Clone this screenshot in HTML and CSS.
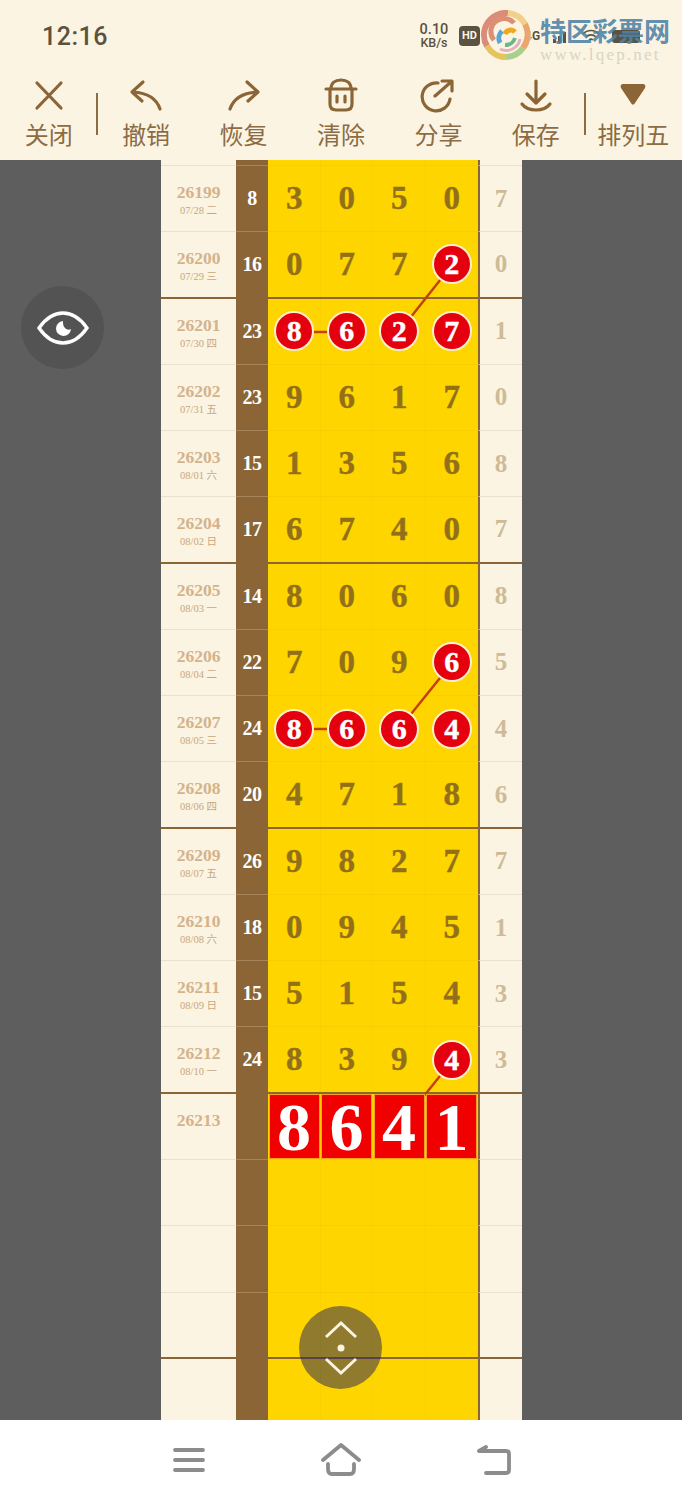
FILE: index.html
```html
<!DOCTYPE html>
<html lang="zh">
<head>
  <meta charset="UTF-8">
  <meta name="viewport" content="width=device-width, initial-scale=1.0">
  <title>排列五</title>
  <link rel="stylesheet" href="styles.css">
</head>
<body>
  <!-- top bar -->
  <div class="header">
    <div class="status">
      <span class="clock">12:16</span>
      <div class="status-right">
        <span class="speed">0.10<br><small>KB/s</small></span>
        <span class="hd">HD</span>
        <span class="sim">1<br>2</span>
        <span class="net">4G</span>
        <svg class="bars" width="16" height="14" viewBox="0 0 16 14"><path d="M1 14V10h3v4zM6 14V7h3v7zM11 14V3h3v11z" fill="#5c5240"/></svg>
        <svg class="wifi" width="18" height="14" viewBox="0 0 18 14"><path d="M1 5a11 11 0 0 1 16 0M4 8a7 7 0 0 1 10 0M7 11a3 3 0 0 1 4 0" fill="none" stroke="#5c5240" stroke-width="1.6"/></svg>
        <span class="battery"></span>
      </div>
      <div class="watermark">
        <svg class="logo" width="50" height="50" viewBox="0 0 50 50">
          <circle cx="25" cy="25" r="25" fill="#fbf4e2"/>
          <g fill="none" stroke-width="6">
            <path d="M27 3A22 22 0 0 0 6 36" stroke="#d98c78"/>
            <path d="M6 36A22 22 0 0 0 25 47" stroke="#e7c35c"/>
            <path d="M25 47A22 22 0 0 0 42 38" stroke="#a8d08a"/>
            <path d="M42 38A22 22 0 0 0 44 14" stroke="#e9a66e"/>
            <path d="M44 14A22 22 0 0 0 27 3" stroke="#f2cf8a"/>
            <path d="M13 30A13 13 0 0 1 33 13" stroke="#dd8f74" stroke-width="5"/>
            <path d="M19 39A14 14 0 0 0 39 29" stroke="#e8b0bc" stroke-width="3"/>
            <path d="M19 33A10 10 0 0 1 21 21" stroke="#5aa7d6" stroke-width="5"/>
            <path d="M24 35A10 10 0 0 0 34 28" stroke="#6bb68c" stroke-width="4"/>
            <path d="M24 24A6 6 0 0 1 34 22" stroke="#f2a51f" stroke-width="5"/>
          </g>
        </svg>
        <div class="mark-text">
          <div class="mark-name">特区彩票网</div>
          <div class="mark-url">www.lqep.net</div>
        </div>
      </div>
    </div>
    <div class="toolbar">
      <div class="tool sep">
        <svg width="36" height="36" viewBox="0 0 36 36"><path d="M6 5l24 25M30 5L6 30" class="ico"/></svg>
        <span>关闭</span>
      </div>
      <div class="tool">
        <svg width="36" height="36" viewBox="0 0 36 36"><path d="M32 31C29 22 22 15 5 14M15 4L4 14l10 9" class="ico"/></svg>
        <span>撤销</span>
      </div>
      <div class="tool">
        <svg width="36" height="36" viewBox="0 0 36 36"><path d="M4 31C7 22 14 15 31 14M21 4l11 10-10 9" class="ico"/></svg>
        <span>恢复</span>
      </div>
      <div class="tool">
        <svg width="36" height="36" viewBox="0 0 36 36"><path d="M8 11c0-6 4-9 10-9s10 3 10 9M3 11h30M7 11v15c0 4 2 6 6 6h10c4 0 6-2 6-6V11M14 18v6M22 18v6" class="ico"/></svg>
        <span>清除</span>
      </div>
      <div class="tool">
        <svg width="36" height="36" viewBox="0 0 36 36"><path d="M18 5A14 14 0 1 0 30 21M15 18L31 4M22 3h10v10" class="ico"/></svg>
        <span>分享</span>
      </div>
      <div class="tool sep">
        <svg width="36" height="36" viewBox="0 0 36 36"><path d="M18 3v22M9 16l9 9 9-9M4 26c3 4 8 6 14 6s11-2 14-6" class="ico"/></svg>
        <span>保存</span>
      </div>
      <div class="tool">
        <svg width="36" height="36" viewBox="0 0 36 36"><path d="M8 6h20c2 0 3 2 2 4L20 25c-1 2-3 2-4 0L6 10C5 8 6 6 8 6z" fill="#8c6536"/></svg>
        <span>排列五</span>
      </div>
    </div>
  </div>

  <!-- chart -->
  <div class="main">
    <div class="board">
      <svg class="links" width="361" height="1260" viewBox="0 0 361 1260">
        <path d="M291 105L238 172M133 172H186M291 503L238 569M133 569H186M291 901L238 967" fill="none" stroke="#c4400c" stroke-width="2.5"/>
      </svg>

      <div class="row stub"><div class="c-id"></div><div class="c-sum"></div><div class="c-num"></div><div class="c-num"></div><div class="c-num"></div><div class="c-num"></div><div class="c-last"></div></div>

      <div class="row">
        <div class="c-id">26199<small>07/28 二</small></div><div class="c-sum">8</div>
        <div class="c-num">3</div><div class="c-num">0</div><div class="c-num">5</div><div class="c-num">0</div>
        <div class="c-last">7</div>
      </div>
      <div class="row end">
        <div class="c-id">26200<small>07/29 三</small></div><div class="c-sum">16</div>
        <div class="c-num">0</div><div class="c-num">7</div><div class="c-num">7</div><div class="c-num"><b>2</b></div>
        <div class="c-last">0</div>
      </div>
      <div class="row">
        <div class="c-id">26201<small>07/30 四</small></div><div class="c-sum">23</div>
        <div class="c-num"><b>8</b></div><div class="c-num"><b>6</b></div><div class="c-num"><b>2</b></div><div class="c-num"><b>7</b></div>
        <div class="c-last">1</div>
      </div>
      <div class="row">
        <div class="c-id">26202<small>07/31 五</small></div><div class="c-sum">23</div>
        <div class="c-num">9</div><div class="c-num">6</div><div class="c-num">1</div><div class="c-num">7</div>
        <div class="c-last">0</div>
      </div>
      <div class="row">
        <div class="c-id">26203<small>08/01 六</small></div><div class="c-sum">15</div>
        <div class="c-num">1</div><div class="c-num">3</div><div class="c-num">5</div><div class="c-num">6</div>
        <div class="c-last">8</div>
      </div>
      <div class="row end">
        <div class="c-id">26204<small>08/02 日</small></div><div class="c-sum">17</div>
        <div class="c-num">6</div><div class="c-num">7</div><div class="c-num">4</div><div class="c-num">0</div>
        <div class="c-last">7</div>
      </div>
      <div class="row">
        <div class="c-id">26205<small>08/03 一</small></div><div class="c-sum">14</div>
        <div class="c-num">8</div><div class="c-num">0</div><div class="c-num">6</div><div class="c-num">0</div>
        <div class="c-last">8</div>
      </div>
      <div class="row">
        <div class="c-id">26206<small>08/04 二</small></div><div class="c-sum">22</div>
        <div class="c-num">7</div><div class="c-num">0</div><div class="c-num">9</div><div class="c-num"><b>6</b></div>
        <div class="c-last">5</div>
      </div>
      <div class="row">
        <div class="c-id">26207<small>08/05 三</small></div><div class="c-sum">24</div>
        <div class="c-num"><b>8</b></div><div class="c-num"><b>6</b></div><div class="c-num"><b>6</b></div><div class="c-num"><b>4</b></div>
        <div class="c-last">4</div>
      </div>
      <div class="row end">
        <div class="c-id">26208<small>08/06 四</small></div><div class="c-sum">20</div>
        <div class="c-num">4</div><div class="c-num">7</div><div class="c-num">1</div><div class="c-num">8</div>
        <div class="c-last">6</div>
      </div>
      <div class="row">
        <div class="c-id">26209<small>08/07 五</small></div><div class="c-sum">26</div>
        <div class="c-num">9</div><div class="c-num">8</div><div class="c-num">2</div><div class="c-num">7</div>
        <div class="c-last">7</div>
      </div>
      <div class="row">
        <div class="c-id">26210<small>08/08 六</small></div><div class="c-sum">18</div>
        <div class="c-num">0</div><div class="c-num">9</div><div class="c-num">4</div><div class="c-num">5</div>
        <div class="c-last">1</div>
      </div>
      <div class="row">
        <div class="c-id">26211<small>08/09 日</small></div><div class="c-sum">15</div>
        <div class="c-num">5</div><div class="c-num">1</div><div class="c-num">5</div><div class="c-num">4</div>
        <div class="c-last">3</div>
      </div>
      <div class="row end">
        <div class="c-id">26212<small>08/10 一</small></div><div class="c-sum">24</div>
        <div class="c-num">8</div><div class="c-num">3</div><div class="c-num">9</div><div class="c-num"><b>4</b></div>
        <div class="c-last">3</div>
      </div>
      <div class="row">
        <div class="c-id">26213</div><div class="c-sum"></div>
        <div class="c-num"><i>8</i></div><div class="c-num"><i>6</i></div><div class="c-num"><i>4</i></div><div class="c-num"><i>1</i></div>
        <div class="c-last"></div>
      </div>
      <div class="row"><div class="c-id"></div><div class="c-sum"></div><div class="c-num"></div><div class="c-num"></div><div class="c-num"></div><div class="c-num"></div><div class="c-last"></div></div>
      <div class="row"><div class="c-id"></div><div class="c-sum"></div><div class="c-num"></div><div class="c-num"></div><div class="c-num"></div><div class="c-num"></div><div class="c-last"></div></div>
      <div class="row end"><div class="c-id"></div><div class="c-sum"></div><div class="c-num"></div><div class="c-num"></div><div class="c-num"></div><div class="c-num"></div><div class="c-last"></div></div>
      <div class="row"><div class="c-id"></div><div class="c-sum"></div><div class="c-num"></div><div class="c-num"></div><div class="c-num"></div><div class="c-num"></div><div class="c-last"></div></div>
    </div>

    <!-- floating buttons -->
    <div class="float-btn eye-btn">
      <svg width="52" height="36" viewBox="0 0 52 36"><path d="M2 18C9 8 17 3 26 3s17 5 24 15c-7 10-15 15-24 15S9 28 2 18z" fill="none" stroke="#fff" stroke-width="3.4"/><path d="M26 11a7.5 7.5 0 1 0 8 8c-2 1-4 1-6-1-2-2-2-4-2-7z" fill="#fff"/></svg>
    </div>
    <div class="float-btn page-btn">
      <svg width="40" height="60" viewBox="0 0 40 60"><path d="M5 19L20 5l15 14M5 41l15 14 15-14" fill="none" stroke="#fbf4e2" stroke-width="3"/><circle cx="20" cy="30" r="3.5" fill="#fbf4e2"/></svg>
    </div>
  </div>

  <!-- system nav -->
  <div class="nav">
    <svg width="34" height="30" viewBox="0 0 34 30"><path d="M3 5h28M3 15h28M3 25h28" class="nav-ico"/></svg>
    <svg width="42" height="34" viewBox="0 0 42 34"><path d="M3 17L21 2l18 15M8 21v5c0 3 1 5 4 5h18c3 0 4-2 4-5v-5" class="nav-ico"/></svg>
    <svg width="36" height="32" viewBox="0 0 36 32"><path d="M3 7h27c2 0 3 1 3 3v16c0 2-1 3-3 3H10M10 3L3 7" class="nav-ico"/></svg>
  </div>
</body>
</html>
```

FILE: styles.css
```css
* {
  box-sizing: border-box;
  margin: 0;
  padding: 0;
}
body {
  width: 682px;
  height: 1500px;
  overflow: hidden;
  display: flex;
  flex-direction: column;
  background-color: #fff;
  font-family: "Noto Sans CJK SC", "Noto Sans", sans-serif;
}
/* top bar */
.header {
  height: 160px;
  background-color: #fbf4e2;
  color: #8c6c44;
}
.status {
  position: relative;
  height: 72px;
  display: flex;
  align-items: center;
  justify-content: space-between;
  padding: 0 42px;
  color: #5c5240;
}
.clock {
  font-family: Roboto, sans-serif;
  font-weight: 500;
  font-size: 25px;
  letter-spacing: 0.5px;
}
.status-right {
  display: flex;
  align-items: center;
  font-family: Roboto, sans-serif;
}
.speed {
  width: 32px;
  font-size: 14.5px;
  font-weight: 500;
  line-height: 13px;
  text-align: center;
  margin-right: 9px;
}
.speed small {
  font-size: 12.5px;
}
.hd {
  width: 21px;
  height: 20px;
  line-height: 20px;
  border-radius: 4px;
  background-color: #5c5240;
  color: #fbf4e2;
  font-size: 11px;
  font-weight: 700;
  text-align: center;
}
.sim {
  width: 5px;
  font-size: 10px;
  line-height: 10px;
  color: #7d3b2a;
  margin: 0 38px 0 2px;
}
.net {
  width: 14px;
  font-size: 12px;
  font-weight: 700;
  margin-right: 13px;
}
.wifi {
  margin: 0 12px 0 14px;
}
.battery {
  width: 28px;
  height: 13px;
  border-radius: 3px;
  background-color: #5c5240;
}
.watermark {
  position: absolute;
  left: 481px;
  top: 10px;
  display: flex;
  gap: 9px;
}
.mark-text {
  margin-top: 5px;
}
.mark-name {
  font-size: 26px;
  font-weight: 700;
  line-height: 30px;
  color: rgba(78, 130, 168, 0.9);
  white-space: nowrap;
}
.mark-url {
  font-family: "Liberation Serif", serif;
  font-size: 17px;
  line-height: 20px;
  letter-spacing: 2.2px;
  color: #d9d3c6;
  white-space: nowrap;
}
.toolbar {
  display: flex;
  height: 88px;
}
.tool {
  position: relative;
  flex: 1;
  display: flex;
  flex-direction: column;
  align-items: center;
  padding-top: 6px;
}
.tool svg {
  flex: none;
}
.tool span {
  font-size: 24px;
  line-height: 34px;
  margin-top: 3px;
  white-space: nowrap;
}
.sep::after {
  content: "";
  position: absolute;
  right: -1px;
  top: 21px;
  width: 2px;
  height: 42px;
  background-color: #8c6c44;
}
.ico {
  fill: none;
  stroke: #8c6536;
  stroke-width: 3.2;
  stroke-linecap: round;
  stroke-linejoin: round;
}
/* chart */
.main {
  position: relative;
  height: 1260px;
  background-color: #5e5e5e;
  padding-left: 161px;
}
.board {
  position: relative;
  width: 361px;
  height: 1260px;
  overflow: hidden;
  background-color: #fbf4e2;
}
.links {
  position: absolute;
  left: 0;
  top: 0;
  z-index: 1;
}
.row {
  display: grid;
  grid-template-columns: 75px 32px repeat(4, 52.5px) 44px;
  grid-template-rows: 66.28px;
  height: 66.28px;
}
.row.stub {
  grid-template-rows: 6px;
  height: 6px;
}
.row > div {
  border-bottom: 1px solid #e9e1cd;
}
.c-id {
  display: flex;
  flex-direction: column;
  align-items: center;
  padding-top: 16px;
  font-family: "Liberation Serif", "Noto Sans CJK SC", serif;
  font-weight: 700;
  font-size: 17.5px;
  line-height: 20px;
  color: #d4b38c;
}
.stub .c-id {
  padding-top: 0;
}
.c-id small {
  font-size: 10.5px;
  line-height: 15px;
  margin-top: 1px;
  font-weight: 400;
  white-space: nowrap;
  color: #c9a67c;
}
.c-sum {
  display: flex;
  align-items: center;
  justify-content: center;
  background-color: #8c6536;
  color: #fff;
  font-family: "Liberation Serif", serif;
  font-weight: 700;
  font-size: 20px;
  letter-spacing: -0.5px;
}
.row > .c-sum {
  border-bottom-color: #a5845a;
}
.c-num {
  position: relative;
  display: flex;
  align-items: center;
  justify-content: center;
  background-color: #ffd500;
  color: #92701a;
  font-family: "Liberation Serif", serif;
  font-weight: 700;
  font-size: 33px;
  -webkit-text-stroke: 0.4px #92701a;
  box-shadow: inset -1px 0 0 #f9d000;
}
.row > .c-num {
  border-bottom-color: #f6cf00;
}
.c-last {
  display: flex;
  align-items: center;
  justify-content: center;
  border-left: 2px solid #8c6536;
  color: #cdbb98;
  font-family: "Liberation Serif", serif;
  font-weight: 700;
  font-size: 25px;
}
.row.end > div {
  border-bottom: 2px solid #8c6536;
}
.row.end > .c-sum {
  border-bottom-color: #8c6536;
}
/* drawn number on a cell */
.c-num b {
  position: relative;
  z-index: 2;
  width: 40px;
  height: 40px;
  border-radius: 50%;
  border: 2px solid #fdf0c8;
  background-color: #e4000f;
  color: #fff;
  -webkit-text-stroke: 0.4px #fff;
  font-size: 30px;
  line-height: 35px;
  text-align: center;
}
/* result row */
.c-num i {
  position: relative;
  z-index: 2;
  flex: 1;
  align-self: stretch;
  margin: 1px 2px 1px 1.5px;
  background-color: #f00000;
  box-shadow: 0 0 0 1px #f4a21c;
  color: #fff;
  -webkit-text-stroke: 0;
  font-style: normal;
  font-size: 68px;
  line-height: 64px;
  text-align: center;
}
.float-btn {
  position: absolute;
  z-index: 3;
  display: flex;
  align-items: center;
  justify-content: center;
  width: 83px;
  height: 83px;
  border-radius: 50%;
}
.eye-btn {
  left: 21px;
  top: 126px;
  background-color: #535353;
}
.page-btn {
  left: 299px;
  top: 1146px;
  background-color: rgba(32, 32, 90, 0.5);
}
/* system nav */
.nav {
  flex: 1;
  display: flex;
  align-items: center;
  padding: 0 170px 0 172px;
  justify-content: space-between;
}
.nav-ico {
  fill: none;
  stroke: #8c8c8c;
  stroke-width: 3.8;
  stroke-linecap: round;
  stroke-linejoin: round;
}
```
